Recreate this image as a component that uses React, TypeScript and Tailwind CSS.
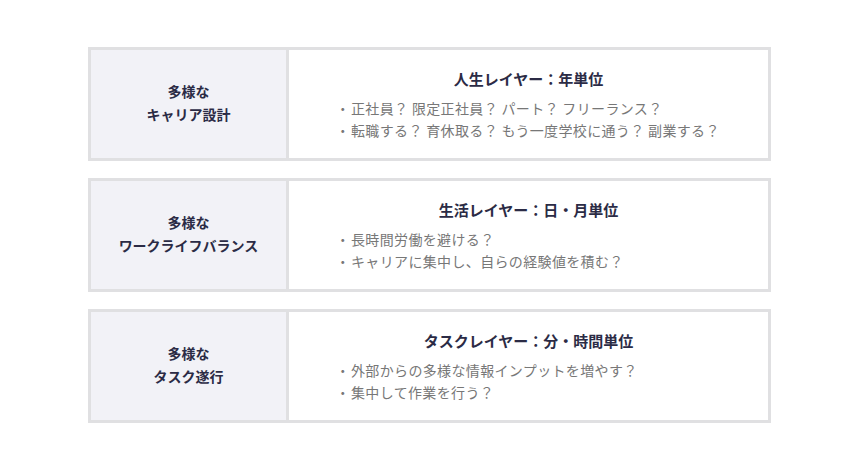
import React from 'react';

interface Row {
  label: string[];
  title: string;
  items: string[];
}

const ROWS: Row[] = [
  {
    label: ['多様な', 'キャリア設計'],
    title: '人生レイヤー：年単位',
    items: ['正社員？ 限定正社員？ パート？ フリーランス？', '転職する？ 育休取る？ もう一度学校に通う？ 副業する？'],
  },
  {
    label: ['多様な', 'ワークライフバランス'],
    title: '生活レイヤー：日・月単位',
    items: ['長時間労働を避ける？', 'キャリアに集中し、自らの経験値を積む？'],
  },
  {
    label: ['多様な', 'タスク遂行'],
    title: 'タスクレイヤー：分・時間単位',
    items: ['外部からの多様な情報インプットを増やす？', '集中して作業を行う？'],
  },
];

export default function App() {
  return (
    <div
      className="w-[860px] h-[470px] bg-white pt-[47px]"
      style={{ fontFamily: '"Noto Sans CJK JP", "Noto Sans", sans-serif' }}
    >
      <div className="w-[683px] ml-[88px] flex flex-col gap-[17px]">
        {ROWS.map((row) => (
          <div key={row.title} className="flex h-[114px] border-[3px] border-[#e0e0e2]">
            {/* label column */}
            <div className="w-[198px] shrink-0 bg-[#f2f2f7] border-r-[3px] border-[#e0e0e2] flex flex-col items-center justify-center pb-[2px] text-[14px] leading-[23px] font-bold text-[#2b2b45]">
              {row.label.map((l) => (
                <span key={l}>{l}</span>
              ))}
            </div>
            {/* detail column */}
            <div className="flex-1 flex flex-col justify-center">
              <h3 className="text-center text-[15px] leading-[22px] font-bold text-[#2b2b45] mb-[7px]">{row.title}</h3>
              <ul className="pl-[46px] text-[14px] leading-[22px] tracking-[0.35px] text-[#777]">
                {row.items.map((it) => (
                  <li key={it} className="flex">
                    <span className="w-[16px] text-center shrink-0">・</span>
                    <span>{it}</span>
                  </li>
                ))}
              </ul>
            </div>
          </div>
        ))}
      </div>
    </div>
  );
}
